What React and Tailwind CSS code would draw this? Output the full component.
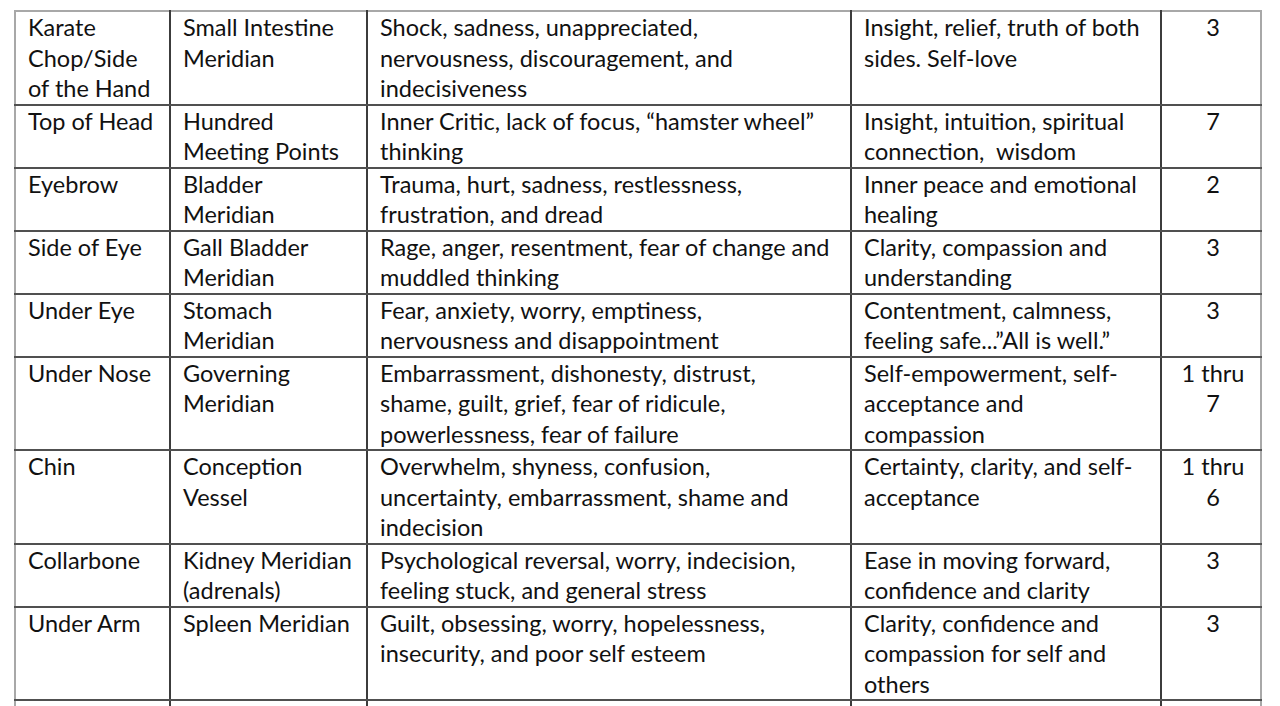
import React from 'react'

const rows = [
  [['Karate', 'Chop/Side', 'of the Hand'], ['Small Intestine', 'Meridian'], ['Shock, sadness, unappreciated,', 'nervousness, discouragement, and', 'indecisiveness'], ['Insight, relief, truth of both', 'sides. Self-love'], ['3']],
  [['Top of Head'], ['Hundred', 'Meeting Points'], ['Inner Critic, lack of focus, \u201chamster wheel\u201d', 'thinking'], ['Insight, intuition, spiritual', 'connection,\u00a0 wisdom'], ['7']],
  [['Eyebrow'], ['Bladder', 'Meridian'], ['Trauma, hurt, sadness, restlessness,', 'frustration, and dread'], ['Inner peace and emotional', 'healing'], ['2']],
  [['Side of Eye'], ['Gall Bladder', 'Meridian'], ['Rage, anger, resentment, fear of change and', 'muddled thinking'], ['Clarity, compassion and', 'understanding'], ['3']],
  [['Under Eye'], ['Stomach', 'Meridian'], ['Fear, anxiety, worry, emptiness,', 'nervousness and disappointment'], ['Contentment, calmness,', 'feeling safe...\u201dAll is well.\u201d'], ['3']],
  [['Under Nose'], ['Governing', 'Meridian'], ['Embarrassment, dishonesty, distrust,', 'shame, guilt, grief, fear of ridicule,', 'powerlessness, fear of failure'], ['Self-empowerment, self-', 'acceptance and', 'compassion'], ['1 thru', '7']],
  [['Chin'], ['Conception', 'Vessel'], ['Overwhelm, shyness, confusion,', 'uncertainty, embarrassment, shame and', 'indecision'], ['Certainty, clarity, and self-', 'acceptance'], ['1 thru', '6']],
  [['Collarbone'], ['Kidney Meridian', '(adrenals)'], ['Psychological reversal, worry, indecision,', 'feeling stuck, and general stress'], ['Ease in moving forward,', 'confidence and clarity'], ['3']],
  [['Under Arm'], ['Spleen Meridian'], ['Guilt, obsessing, worry, hopelessness,', 'insecurity, and poor self esteem'], ['Clarity, confidence and', 'compassion for self and', 'others'], ['3']],
  [['\u00a0'], ['\u00a0'], ['\u00a0'], ['\u00a0'], ['\u00a0']],
]

function Cell({ lines, last }) {
  return (
    <td
      className={
        'align-top border-b-2 border-b-[#505050] pl-[12px] pr-[8px] pt-0 pb-0 ' +
        (last ? 'border-r-2 border-r-[#a8a8a8] text-center pl-[4px] pr-[4px]' : 'border-r-2 border-r-[#3c3c3c]')
      }
    >
      {lines.map((l, i) => (
        <div key={i} className="whitespace-nowrap">{l}</div>
      ))}
    </td>
  )
}

export default function App() {
  return (
    <div className="w-[1280px] h-[706px] overflow-hidden bg-white pt-[10px] pl-[14px]">
      <table
        className="table-fixed border-collapse text-[#111] text-[23.5px] leading-[30.5px]"
        style={{ fontFamily: 'Lato, "Open Sans", sans-serif' }}
      >
        <colgroup>
          <col className="w-[155px]" />
          <col className="w-[197px]" />
          <col className="w-[484px]" />
          <col className="w-[310px]" />
          <col className="w-[100px]" />
        </colgroup>
        <tbody className="border-l-2 border-l-[#a8a8a8] border-t-2 border-t-[#a8a8a8]">
          {rows.map((r, i) => (
            <tr key={i} className={i === 0 ? 'border-t-2 border-t-[#a8a8a8]' : ''}>
              {r.map((c, j) => (
                <Cell key={j} lines={c} last={j === 4} />
              ))}
            </tr>
          ))}
        </tbody>
      </table>
    </div>
  )
}
